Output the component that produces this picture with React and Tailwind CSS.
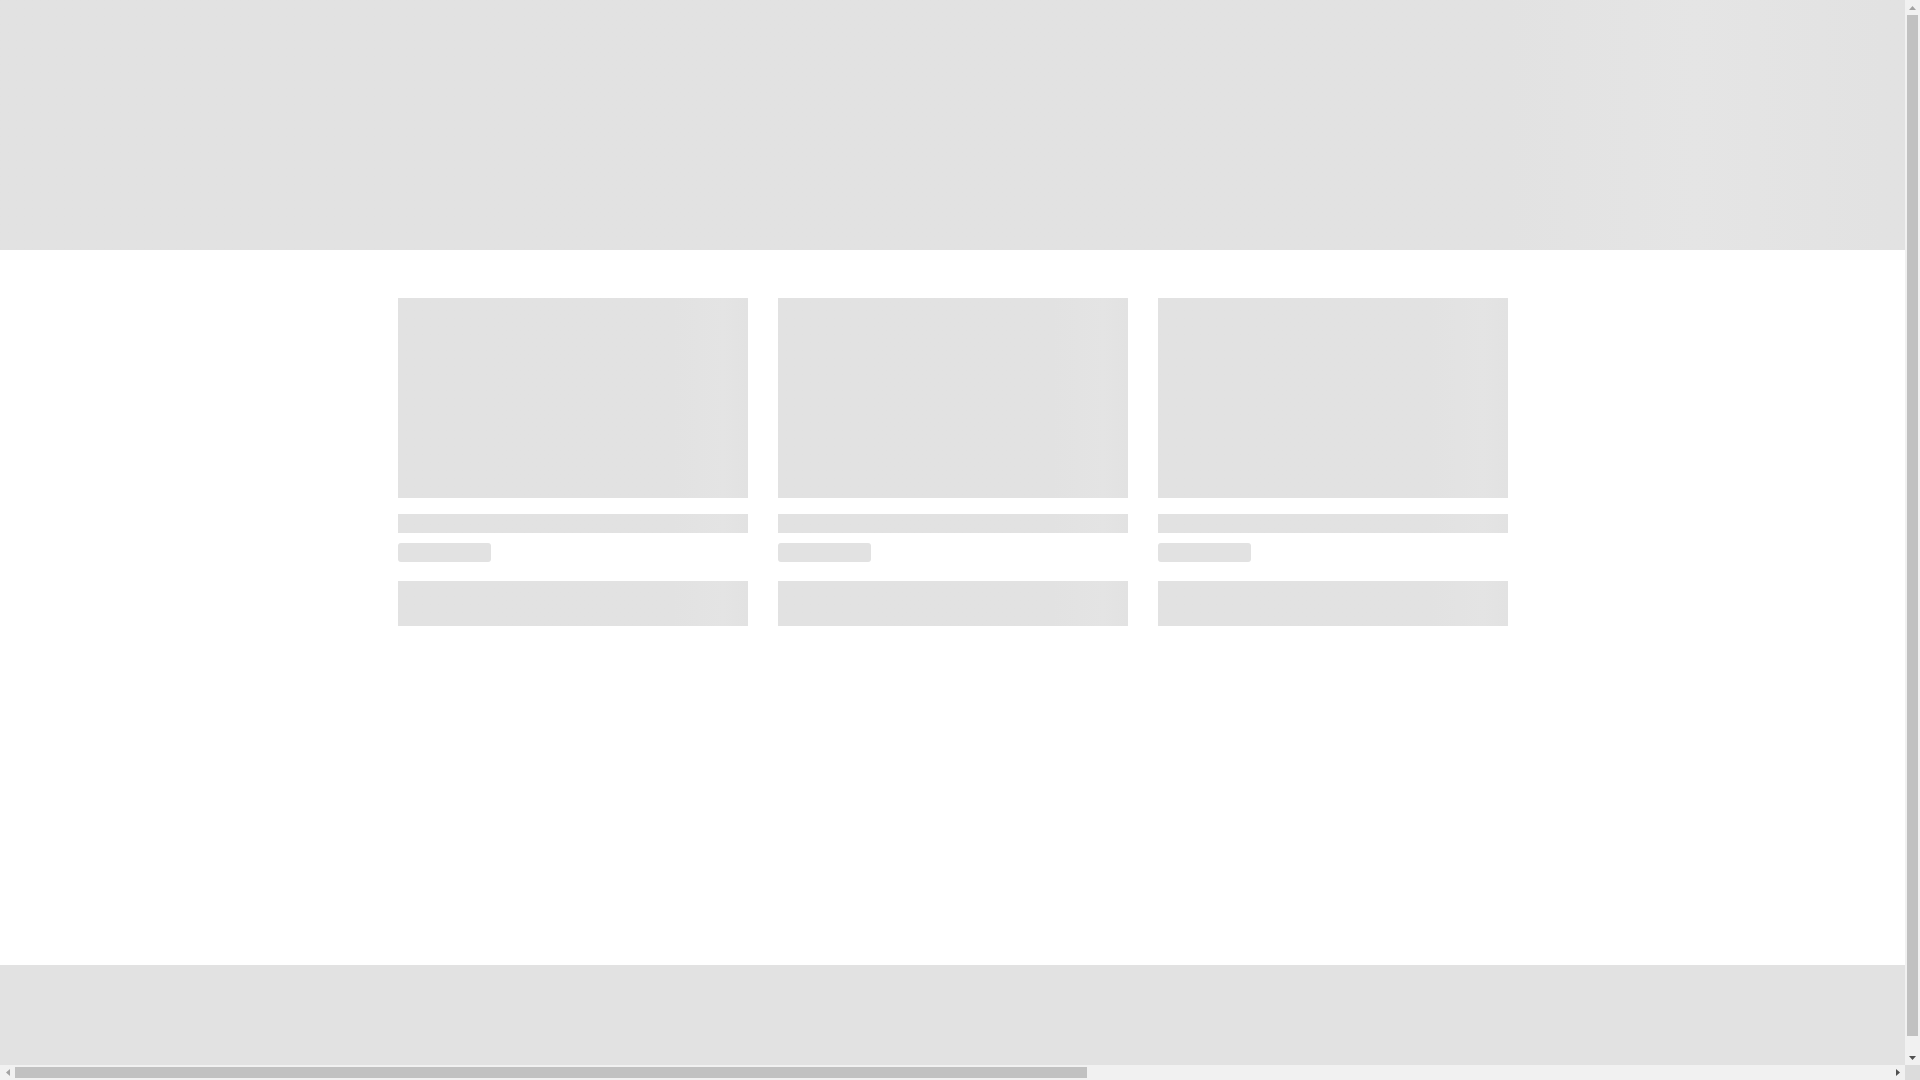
const CARDS = [0, 1, 2];

const shimmer =
  'bg-linear-to-r from-[#e2e2e2] from-78% via-[#e4e4e4] via-93% to-[#e2e2e2] to-100%';

const SkeletonCard = () => (
  <div className="px-[15px]">
    <div className={`h-[200px] w-full ${shimmer}`} />
    <div className={`mt-4 h-[19px] w-full ${shimmer}`} />
    <div className="mt-[10px] h-[19px] w-[93px] rounded-[3px] bg-[#e2e2e2]" />
    <div className={`mt-[19px] h-[45px] w-full ${shimmer}`} />
  </div>
);

// small scrollbar arrow glyphs
const Arrow = ({ dir, color }) => {
  const pts = {
    up: '0,4 3.5,0 7,4',
    down: '0,0 7,0 3.5,4',
    left: '4,0 4,7 0,3.5',
    right: '0,0 4,3.5 0,7',
  }[dir];
  const vertical = dir === 'up' || dir === 'down';
  return (
    <svg
      width={vertical ? 7 : 4}
      height={vertical ? 4 : 7}
      viewBox={vertical ? '0 0 7 4' : '0 0 4 7'}
    >
      <polygon points={pts} fill={color} />
    </svg>
  );
};

export default function App() {
  return (
    <div className="flex h-screen w-screen flex-col overflow-hidden bg-white font-['Liberation_Sans',sans-serif]">
      <div className="flex min-h-0 flex-1">
        {/* Page viewport */}
        <div className="min-w-0 flex-1 overflow-hidden">
          <div className="flex min-h-[1080px] flex-col">
            {/* Header placeholder */}
            <header className="h-[250px] shrink-0 bg-linear-to-r from-[#e2e2e2] from-[79%] via-[#e5e5e5] via-[89%] to-[#e2e2e2] to-[99%]" />

            {/* Product grid placeholder */}
            <main className="flex-1 pt-12">
              <div className="mx-auto w-[1140px] px-[15px]">
                <div className="-mx-[15px] grid grid-cols-3">
                  {CARDS.map((i) => (
                    <SkeletonCard key={i} />
                  ))}
                </div>
              </div>
            </main>

            {/* Footer placeholder */}
            <footer className="h-[115px] shrink-0 bg-[#e2e2e2]" />
          </div>
        </div>

        {/* Vertical scrollbar */}
        <div className="flex w-[15px] shrink-0 flex-col bg-[#f1f1f1]">
          <div className="flex h-[15px] items-center justify-center">
            <Arrow dir="up" color="#a3a3a3" />
          </div>
          <div className="flex-1 px-[2px]">
            <div className="h-[1021px] bg-[#c1c1c1]" />
          </div>
          <div className="flex h-[15px] items-center justify-center">
            <Arrow dir="down" color="#505050" />
          </div>
        </div>
      </div>

      {/* Horizontal scrollbar */}
      <div className="flex h-[15px] shrink-0 bg-[#f1f1f1]">
        <div className="flex w-[15px] items-center justify-center">
          <Arrow dir="left" color="#a3a3a3" />
        </div>
        <div className="flex flex-1 items-center">
          <div className="h-[11px] w-[1072px] bg-[#c1c1c1]" />
        </div>
        <div className="flex w-[15px] items-center justify-center">
          <Arrow dir="right" color="#505050" />
        </div>
        <div className="w-[15px] bg-[#dcdcdc]" />
      </div>
    </div>
  );
}
